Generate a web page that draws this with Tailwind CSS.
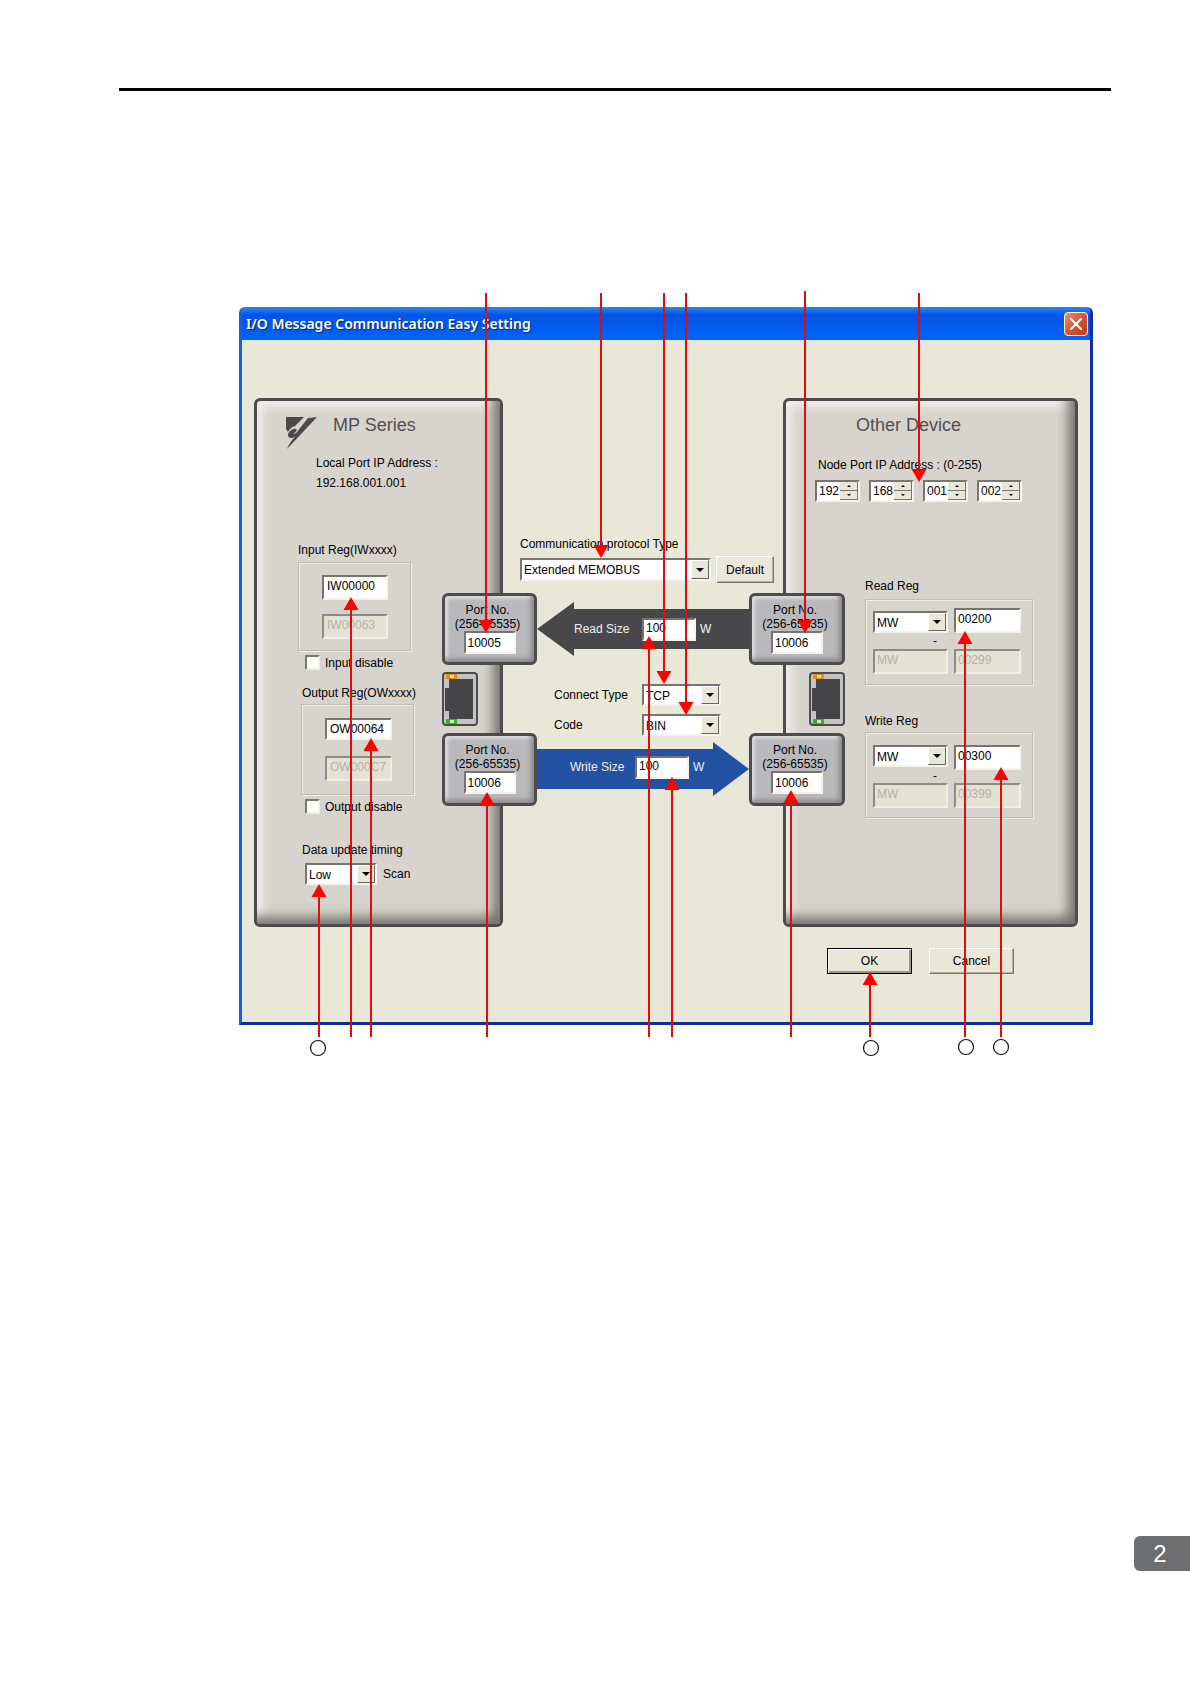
<!DOCTYPE html>
<html lang="en">
<head>
  <meta charset="UTF-8" />
  <meta name="viewport" content="width=device-width, initial-scale=1.0" />
  <title>I/O Message Communication Easy Setting</title>
  <script src="https://cdn.jsdelivr.net/npm/@tailwindcss/browser@4"></script>
</head>
<body class="bg-white min-h-screen flex flex-col font-['Liberation_Sans',Arial,sans-serif] text-[12px] leading-5 text-black">

  <!-- Page rule -->
  <header class="mt-[88px] ml-[119px] mr-[79px] border-t-3 border-black"></header>

  <!-- Figure: dialog with callout arrows on top -->
  <figure class="relative mt-[199px] ml-[239px] mr-[97px] pt-[17px]">

    <section class="bg-[#e9e8d8] border-x-3 border-b-3 border-l-[#1c5fdc] border-r-[#0a2fb4] border-b-[#0a2fa8] rounded-t-md overflow-hidden">

      <!-- Title bar -->
      <div class="-mx-[3px] h-[33px] pl-[7px] pr-[5px] flex items-center justify-between bg-linear-to-b from-[#2a86f5] via-[#0353e4] via-25% to-[#0264fb]">
        <h1 class="font-['Noto_Sans','Open_Sans',sans-serif] font-semibold text-[14px] text-white [text-shadow:1px_1px_1px_#08246b]">I/O Message Communication Easy Setting</h1>
        <button aria-label="Close" class="size-6 rounded-[4px] border border-white bg-linear-to-br from-[#f09070] via-[#dc5030] to-[#c03c18] flex items-center justify-center">
          <svg class="size-3" viewBox="0 0 12 12" fill="none" stroke="#fff" stroke-width="2.2" stroke-linecap="round"><path d="M1 1 11 11M11 1 1 11" /></svg>
        </button>
      </div>

      <div class="flex pt-[58px] px-3">

        <!-- MP Series -->
        <div class="w-[249px] h-[529px] shrink-0 rounded-md border-3 border-[#4c4c4e] bg-[#d7d4ce] shadow-[inset_-12px_-12px_12px_-5px_#77746e,inset_9px_9px_9px_-3px_#eeedea]">
          <div class="h-[139px] pt-[15px]">
            <div class="flex items-start gap-4 pl-[29px]">
              <svg class="w-[31px] h-[33px]" viewBox="0 0 31 33" fill="#4a4a4c">
                <path d="M0 1H18L9 10C5 11 3 14 2 16L0 13Z" />
                <path d="M31 1 1 33C3 28 5 25 9 21 5 23 2 22 2 19 2 16 7 12 10 13 12 14 9 17 7 18 10 18 12 15 14 12L22 2Z" />
              </svg>
              <h2 class="text-[18px] leading-[18px] text-[#505052]">MP Series</h2>
            </div>
            <p class="mt-1 pl-[59px]">Local Port IP Address :</p>
            <p class="pl-[59px]">192.168.001.001</p>
          </div>

          <div class="flex justify-between">
            <div class="pl-[41px] w-[185px] whitespace-nowrap">
              <label for="inReg" class="block">Input Reg(IWxxxx)</label>
              <div class="mt-0.5 w-[113px] h-[89px] pt-3 pl-[23px] border border-[#bebbb3] shadow-[1px_1px_0_#efeee8,inset_1px_1px_0_#efeee8] flex flex-col gap-3.5">
                <input id="inReg" value="IW00000" class="w-[66px] h-[25px] pl-[3px] pb-1 bg-white border-2 border-t-[#77756e] border-l-[#77756e] border-r-[#f4f3ee] border-b-[#f4f3ee]">
                <input aria-label="Input register end" value="IW00063" disabled class="w-[66px] h-[25px] pl-[3px] pb-1 bg-[#e4e2d4] text-[#b4b2a4] border-2 border-t-[#8d8b82] border-l-[#8d8b82] border-r-[#f0efe6] border-b-[#f0efe6]">
              </div>
              <div class="mt-1 ml-[7px] h-[15px] flex items-center gap-[5px]">
                <input type="checkbox" id="inDis" class="appearance-none size-[15px] bg-white border-2 border-t-[#77756e] border-l-[#77756e] border-r-[#f0efe0] border-b-[#f0efe0]">
                <label for="inDis">Input disable</label>
              </div>

              <label for="outReg" class="block mt-[13px] pl-1">Output Reg(OWxxxx)</label>
              <div class="mt-px ml-[3px] w-[113px] h-[91px] pt-[13px] pl-[23px] border border-[#bebbb3] shadow-[1px_1px_0_#efeee8,inset_1px_1px_0_#efeee8] flex flex-col gap-4">
                <input id="outReg" value="OW00064" class="w-[67px] h-[22px] pl-[3px] bg-white border-2 border-t-[#77756e] border-l-[#77756e] border-r-[#f4f3ee] border-b-[#f4f3ee]">
                <input aria-label="Output register end" value="OW000C7" disabled class="w-[67px] h-[25px] pl-[3px] pb-1 bg-[#e4e2d4] text-[#b4b2a4] border-2 border-t-[#8d8b82] border-l-[#8d8b82] border-r-[#f0efe6] border-b-[#f0efe6]">
              </div>
              <div class="mt-1 ml-[7px] h-[15px] flex items-center gap-[5px]">
                <input type="checkbox" id="outDis" class="appearance-none size-[15px] bg-white border-2 border-t-[#77756e] border-l-[#77756e] border-r-[#f0efe0] border-b-[#f0efe0]">
                <label for="outDis">Output disable</label>
              </div>

              <label for="timing" class="block mt-[26px] pl-1">Data update timing</label>
              <div class="mt-[3px] ml-[7px] flex items-center gap-[6px]">
                <div class="relative w-[72px]">
                  <select id="timing" class="appearance-none block w-full h-[22px] pl-[2px] bg-white border-2 border-t-[#77756e] border-l-[#77756e] border-r-[#f4f3ee] border-b-[#f4f3ee]">
                    <option>Low</option>
                    <option>High</option>
                  </select>
                  <span class="absolute right-0.5 inset-y-0.5 w-[18px] flex items-center justify-center bg-[#e9e8d8] border border-t-white border-l-white border-r-[#66645c] border-b-[#66645c] pointer-events-none">
                    <svg class="w-2 h-1" viewBox="0 0 8 4"><path d="M0 0H8L4 4Z" /></svg>
                  </span>
                </div>
                <span>Scan</span>
              </div>
            </div>

            <!-- Local ports -->
            <div class="relative mt-[53px] -mr-[37px] shrink-0 flex flex-col items-start gap-[7px]">
              <div class="w-[95px] h-[72px] pt-[7px] rounded-md border-3 border-[#4c4c4e] bg-[#b9b9bb] shadow-[inset_-4px_-4px_5px_-1px_#88888b,inset_3px_3px_3px_#d8d8da] text-center leading-[14px]">
                <label for="locRead" class="block pr-1">Port No.<br>(256-65535)</label>
                <input id="locRead" value="10005" class="block mx-auto w-[52px] h-[23px] pl-[2px] bg-white border-2 border-t-[#77756e] border-l-[#77756e] border-r-[#f4f3ee] border-b-[#f4f3ee]">
              </div>
              <svg class="w-9 h-[54px]" viewBox="0 0 36 54">
                <rect x="1" y="1" width="34" height="52" rx="3" fill="#c3c3c5" stroke="#4c4c4e" stroke-width="2" />
                <path d="M7 7H31V47H7V39H3V16H7Z" fill="#454547" />
                <rect x="4" y="2" width="11" height="5" fill="#ee8a10" /><rect x="8" y="3" width="4" height="3" fill="#ffe69a" />
                <rect x="4" y="47" width="11" height="5" fill="#2eb51c" /><rect x="8" y="48" width="4" height="3" fill="#c9ffae" />
              </svg>
              <div class="w-[95px] h-[73px] pt-[7px] rounded-md border-3 border-[#4c4c4e] bg-[#b9b9bb] shadow-[inset_-4px_-4px_5px_-1px_#88888b,inset_3px_3px_3px_#d8d8da] text-center leading-[14px]">
                <label for="locWrite" class="block pr-1">Port No.<br>(256-65535)</label>
                <input id="locWrite" value="10006" class="block mx-auto w-[52px] h-[23px] pl-[2px] bg-white border-2 border-t-[#77756e] border-l-[#77756e] border-r-[#f4f3ee] border-b-[#f4f3ee]">
              </div>
            </div>
          </div>
        </div>

        <!-- Link settings -->
        <div class="flex-1 min-w-0 pt-[136px] whitespace-nowrap">
          <label for="proto" class="block pl-[17px]">Communication protocol Type</label>
          <div class="mt-0.5 pl-[17px] pr-[9px] flex items-center gap-[5px]">
            <div class="relative flex-1">
              <select id="proto" class="appearance-none block w-full h-[23px] pl-[2px] bg-white border-2 border-t-[#77756e] border-l-[#77756e] border-r-[#f4f3ee] border-b-[#f4f3ee]">
                <option>Extended MEMOBUS</option>
              </select>
              <span class="absolute right-0.5 inset-y-0.5 w-[18px] flex items-center justify-center bg-[#e9e8d8] border border-t-white border-l-white border-r-[#66645c] border-b-[#66645c] pointer-events-none">
                <svg class="w-2 h-1" viewBox="0 0 8 4"><path d="M0 0H8L4 4Z" /></svg>
              </span>
            </div>
            <button class="w-[58px] h-[27px] bg-[#e9e8d8] border border-t-white border-l-white border-r-[#77756e] border-b-[#77756e] shadow-[inset_-1px_-1px_0_#b0aea2]">Default</button>
          </div>

          <div class="mt-[19px] mx-[34px] h-[54px] pl-[37px] flex items-center bg-[#48484a] text-[#f0f0f0] [clip-path:polygon(0_50%,37px_0,37px_7px,100%_7px,100%_47px,37px_47px,37px_100%)]">
            <label for="readSize" class="w-[68px]">Read Size</label>
            <input id="readSize" value="100" class="w-[54px] h-[23px] pl-[2px] pb-[2px] bg-white text-black border-2 border-t-[#77756e] border-l-[#77756e] border-r-[#f4f3ee] border-b-[#f4f3ee]">
            <span class="pl-1">W</span>
          </div>

          <div class="mt-7 pl-[51px] flex items-center">
            <label for="conn" class="w-[88px]">Connect Type</label>
            <div class="relative w-[79px]">
              <select id="conn" class="appearance-none block w-full h-[22px] pl-[2px] bg-white border-2 border-t-[#77756e] border-l-[#77756e] border-r-[#f4f3ee] border-b-[#f4f3ee]">
                <option>TCP</option>
                <option>UDP</option>
              </select>
              <span class="absolute right-0.5 inset-y-0.5 w-[18px] flex items-center justify-center bg-[#e9e8d8] border border-t-white border-l-white border-r-[#66645c] border-b-[#66645c] pointer-events-none">
                <svg class="w-2 h-1" viewBox="0 0 8 4"><path d="M0 0H8L4 4Z" /></svg>
              </span>
            </div>
          </div>
          <div class="mt-2 pl-[51px] flex items-center">
            <label for="code" class="w-[88px]">Code</label>
            <div class="relative w-[79px]">
              <select id="code" class="appearance-none block w-full h-[22px] pl-[2px] bg-white border-2 border-t-[#77756e] border-l-[#77756e] border-r-[#f4f3ee] border-b-[#f4f3ee]">
                <option>BIN</option>
                <option>ASCII</option>
              </select>
              <span class="absolute right-0.5 inset-y-0.5 w-[18px] flex items-center justify-center bg-[#e9e8d8] border border-t-white border-l-white border-r-[#66645c] border-b-[#66645c] pointer-events-none">
                <svg class="w-2 h-1" viewBox="0 0 8 4"><path d="M0 0H8L4 4Z" /></svg>
              </span>
            </div>
          </div>

          <div class="mt-[6px] mx-[34px] h-[54px] pl-[33px] pb-1 flex items-center bg-[#2352a2] text-[#f0f0f0] [clip-path:polygon(100%_50%,calc(100%-36px)_0,calc(100%-36px)_7px,0_7px,0_47px,calc(100%-36px)_47px,calc(100%-36px)_100%)]">
            <label for="writeSize" class="w-[65px]">Write Size</label>
            <input id="writeSize" value="100" class="w-[54px] h-[23px] pl-[2px] pb-[2px] bg-white text-black border-2 border-t-[#77756e] border-l-[#77756e] border-r-[#f4f3ee] border-b-[#f4f3ee]">
            <span class="pl-1">W</span>
          </div>
        </div>

        <!-- Other Device -->
        <div class="w-[295px] h-[529px] shrink-0 rounded-md border-3 border-[#4c4c4e] bg-[#d7d4ce] shadow-[inset_-12px_-12px_12px_-5px_#77746e,inset_9px_9px_9px_-3px_#eeedea]">
          <div class="h-[175px] pt-[15px]">
            <h2 class="pl-[70px] text-[18px] leading-[18px] text-[#505052]">Other Device</h2>
            <p class="mt-[21px] pl-8">Node Port IP Address : (0-255)</p>
            <div class="mt-[5px] pl-[29px] flex gap-[9px]">
              <div class="w-[45px] h-[22px] flex bg-white border-2 border-t-[#77756e] border-l-[#77756e] border-r-[#f4f3ee] border-b-[#f4f3ee]">
                <input aria-label="IP part 1" value="192" class="w-[23px] pl-[2px]">
                <div class="flex-1 flex flex-col">
                  <button aria-label="Up" class="flex-1 flex items-center justify-center bg-[#e9e8d8] border-b border-r border-[#77756e]"><svg class="w-1 h-0.5" viewBox="0 0 4 2"><path d="M0 2H4L2 0Z" /></svg></button>
                  <button aria-label="Down" class="flex-1 flex items-center justify-center bg-[#e9e8d8] border-b border-r border-[#77756e]"><svg class="w-1 h-0.5" viewBox="0 0 4 2"><path d="M0 0H4L2 2Z" /></svg></button>
                </div>
              </div>
              <div class="w-[45px] h-[22px] flex bg-white border-2 border-t-[#77756e] border-l-[#77756e] border-r-[#f4f3ee] border-b-[#f4f3ee]">
                <input aria-label="IP part 2" value="168" class="w-[23px] pl-[2px]">
                <div class="flex-1 flex flex-col">
                  <button aria-label="Up" class="flex-1 flex items-center justify-center bg-[#e9e8d8] border-b border-r border-[#77756e]"><svg class="w-1 h-0.5" viewBox="0 0 4 2"><path d="M0 2H4L2 0Z" /></svg></button>
                  <button aria-label="Down" class="flex-1 flex items-center justify-center bg-[#e9e8d8] border-b border-r border-[#77756e]"><svg class="w-1 h-0.5" viewBox="0 0 4 2"><path d="M0 0H4L2 2Z" /></svg></button>
                </div>
              </div>
              <div class="w-[45px] h-[22px] flex bg-white border-2 border-t-[#77756e] border-l-[#77756e] border-r-[#f4f3ee] border-b-[#f4f3ee]">
                <input aria-label="IP part 3" value="001" class="w-[23px] pl-[2px]">
                <div class="flex-1 flex flex-col">
                  <button aria-label="Up" class="flex-1 flex items-center justify-center bg-[#e9e8d8] border-b border-r border-[#77756e]"><svg class="w-1 h-0.5" viewBox="0 0 4 2"><path d="M0 2H4L2 0Z" /></svg></button>
                  <button aria-label="Down" class="flex-1 flex items-center justify-center bg-[#e9e8d8] border-b border-r border-[#77756e]"><svg class="w-1 h-0.5" viewBox="0 0 4 2"><path d="M0 0H4L2 2Z" /></svg></button>
                </div>
              </div>
              <div class="w-[45px] h-[22px] flex bg-white border-2 border-t-[#77756e] border-l-[#77756e] border-r-[#f4f3ee] border-b-[#f4f3ee]">
                <input aria-label="IP part 4" value="002" class="w-[23px] pl-[2px]">
                <div class="flex-1 flex flex-col">
                  <button aria-label="Up" class="flex-1 flex items-center justify-center bg-[#e9e8d8] border-b border-r border-[#77756e]"><svg class="w-1 h-0.5" viewBox="0 0 4 2"><path d="M0 2H4L2 0Z" /></svg></button>
                  <button aria-label="Down" class="flex-1 flex items-center justify-center bg-[#e9e8d8] border-b border-r border-[#77756e]"><svg class="w-1 h-0.5" viewBox="0 0 4 2"><path d="M0 0H4L2 2Z" /></svg></button>
                </div>
              </div>
            </div>
          </div>

          <div class="flex">
            <!-- Remote ports -->
            <div class="relative mt-[17px] -ml-[37px] shrink-0 flex flex-col items-end gap-[7px]">
              <div class="w-24 h-[72px] pt-[7px] rounded-md border-3 border-[#4c4c4e] bg-[#b9b9bb] shadow-[inset_-4px_-4px_5px_-1px_#88888b,inset_3px_3px_3px_#d8d8da] text-center leading-[14px]">
                <label for="remRead" class="block pr-1">Port No.<br>(256-65535)</label>
                <input id="remRead" value="10006" class="block mx-auto w-[52px] h-[23px] pl-[2px] bg-white border-2 border-t-[#77756e] border-l-[#77756e] border-r-[#f4f3ee] border-b-[#f4f3ee]">
              </div>
              <svg class="w-9 h-[54px]" viewBox="0 0 36 54">
                <rect x="1" y="1" width="34" height="52" rx="3" fill="#c3c3c5" stroke="#4c4c4e" stroke-width="2" />
                <path d="M7 7H31V47H7V39H3V16H7Z" fill="#454547" />
                <rect x="4" y="2" width="11" height="5" fill="#ee8a10" /><rect x="8" y="3" width="4" height="3" fill="#ffe69a" />
                <rect x="4" y="47" width="11" height="5" fill="#2eb51c" /><rect x="8" y="48" width="4" height="3" fill="#c9ffae" />
              </svg>
              <div class="w-24 h-[73px] pt-[7px] rounded-md border-3 border-[#4c4c4e] bg-[#b9b9bb] shadow-[inset_-4px_-4px_5px_-1px_#88888b,inset_3px_3px_3px_#d8d8da] text-center leading-[14px]">
                <label for="remWrite" class="block pr-1">Port No.<br>(256-65535)</label>
                <input id="remWrite" value="10006" class="block mx-auto w-[52px] h-[23px] pl-[2px] bg-white border-2 border-t-[#77756e] border-l-[#77756e] border-r-[#f4f3ee] border-b-[#f4f3ee]">
              </div>
            </div>

            <!-- Registers -->
            <div class="pl-5">
              <label for="readReg" class="block">Read Reg</label>
              <div class="mt-[3px] w-[168px] h-[86px] pt-2 pl-[7px] border border-[#bebbb3] shadow-[1px_1px_0_#efeee8,inset_1px_1px_0_#efeee8]">
                <div class="flex items-end gap-[6px]">
                  <div class="relative w-[75px]">
                    <select aria-label="Read register type" class="appearance-none block w-full h-[22px] pl-[2px] bg-white border-2 border-t-[#77756e] border-l-[#77756e] border-r-[#f4f3ee] border-b-[#f4f3ee]">
                      <option>MW</option>
                    </select>
                    <span class="absolute right-0.5 inset-y-0.5 w-[18px] flex items-center justify-center bg-[#e9e8d8] border border-t-white border-l-white border-r-[#66645c] border-b-[#66645c] pointer-events-none">
                      <svg class="w-2 h-1" viewBox="0 0 8 4"><path d="M0 0H8L4 4Z" /></svg>
                    </span>
                  </div>
                  <input id="readReg" value="00200" class="w-[67px] h-[25px] pl-[2px] pb-1 bg-white border-2 border-t-[#77756e] border-l-[#77756e] border-r-[#f4f3ee] border-b-[#f4f3ee]">
                </div>
                <p class="pl-[60px] leading-4">-</p>
                <div class="flex gap-[6px]">
                  <input aria-label="Read end type" value="MW" disabled class="w-[75px] h-[25px] pl-[2px] pb-1 bg-[#e4e2d4] text-[#b4b2a4] border-2 border-t-[#8d8b82] border-l-[#8d8b82] border-r-[#f0efe6] border-b-[#f0efe6]">
                  <input aria-label="Read end" value="00299" disabled class="w-[67px] h-[25px] pl-[2px] pb-1 bg-[#e4e2d4] text-[#b4b2a4] border-2 border-t-[#8d8b82] border-l-[#8d8b82] border-r-[#f0efe6] border-b-[#f0efe6]">
                </div>
              </div>

              <label for="writeReg" class="block mt-[26px]">Write Reg</label>
              <div class="mt-px w-[168px] h-[86px] pt-3 pl-[7px] border border-[#bebbb3] shadow-[1px_1px_0_#efeee8,inset_1px_1px_0_#efeee8]">
                <div class="flex items-start gap-[6px]">
                  <div class="relative w-[75px]">
                    <select aria-label="Write register type" class="appearance-none block w-full h-[22px] pl-[2px] bg-white border-2 border-t-[#77756e] border-l-[#77756e] border-r-[#f4f3ee] border-b-[#f4f3ee]">
                      <option>MW</option>
                    </select>
                    <span class="absolute right-0.5 inset-y-0.5 w-[18px] flex items-center justify-center bg-[#e9e8d8] border border-t-white border-l-white border-r-[#66645c] border-b-[#66645c] pointer-events-none">
                      <svg class="w-2 h-1" viewBox="0 0 8 4"><path d="M0 0H8L4 4Z" /></svg>
                    </span>
                  </div>
                  <input id="writeReg" value="00300" class="w-[67px] h-[25px] pl-[2px] pb-1 bg-white border-2 border-t-[#77756e] border-l-[#77756e] border-r-[#f4f3ee] border-b-[#f4f3ee]">
                </div>
                <p class="pl-[60px] leading-[13px]">-</p>
                <div class="flex gap-[6px]">
                  <input aria-label="Write end type" value="MW" disabled class="w-[75px] h-[25px] pl-[2px] pb-1 bg-[#e4e2d4] text-[#b4b2a4] border-2 border-t-[#8d8b82] border-l-[#8d8b82] border-r-[#f0efe6] border-b-[#f0efe6]">
                  <input aria-label="Write end" value="00399" disabled class="w-[67px] h-[25px] pl-[2px] pb-1 bg-[#e4e2d4] text-[#b4b2a4] border-2 border-t-[#8d8b82] border-l-[#8d8b82] border-r-[#f0efe6] border-b-[#f0efe6]">
                </div>
              </div>
            </div>
          </div>
        </div>
      </div>

      <!-- Dialog buttons -->
      <div class="pt-[21px] pb-12 pr-[76px] flex justify-end gap-[17px]">
        <button class="w-[85px] h-[26px] bg-[#e9e8d8] border border-black shadow-[inset_1px_1px_0_#fff,inset_-2px_-2px_0_#9a988c]">OK</button>
        <button class="w-[85px] h-[26px] bg-[#e9e8d8] border border-t-white border-l-white border-r-[#77756e] border-b-[#77756e] shadow-[inset_-1px_-1px_0_#b0aea2]">Cancel</button>
      </div>
    </section>

    <!-- Callouts -->
    <svg class="absolute inset-0 w-full h-full overflow-visible pointer-events-none" aria-hidden="true">
      <defs>
        <marker id="tip" markerUnits="userSpaceOnUse" markerWidth="14" markerHeight="16" refX="9" refY="8" orient="auto">
          <path d="M0 0.5 13 8 0 15.5Z" fill="#f00" />
        </marker>
      </defs>
      <g fill="none" stroke="#e60a0a" stroke-width="2">
        <path d="M247 3V339" marker-end="url(#tip)" />
        <path d="M362 3V264" marker-end="url(#tip)" />
        <path d="M425 3V390" marker-end="url(#tip)" />
        <path d="M447 3V421" marker-end="url(#tip)" />
        <path d="M566 1V339" marker-end="url(#tip)" />
        <path d="M680 3V188" marker-end="url(#tip)" />
        <path d="M80 747V598" marker-end="url(#tip)" />
        <path d="M112 747V311" marker-end="url(#tip)" />
        <path d="M132 747V452" marker-end="url(#tip)" />
        <path d="M248 747V506" marker-end="url(#tip)" />
        <path d="M410 747V350" marker-end="url(#tip)" />
        <path d="M433 747V491" marker-end="url(#tip)" />
        <path d="M552 747V504" marker-end="url(#tip)" />
        <path d="M631 747V686" marker-end="url(#tip)" />
        <path d="M726 747V345" marker-end="url(#tip)" />
        <path d="M762 747V481" marker-end="url(#tip)" />
      </g>
      <g fill="#fff" stroke="#111" stroke-width="1.2">
        <circle cx="79" cy="758" r="7.5" />
        <circle cx="632" cy="758" r="7.5" />
        <circle cx="727" cy="757" r="7.5" />
        <circle cx="762" cy="757" r="7.5" />
      </g>
    </svg>
  </figure>

  <!-- Chapter tab -->
  <footer class="mt-auto mb-[113px] flex justify-end">
    <span class="w-14 h-[35px] pr-1 rounded-l-md bg-[#6d6e70] text-white text-[24px] flex items-center justify-center">2</span>
  </footer>
</body>
</html>
